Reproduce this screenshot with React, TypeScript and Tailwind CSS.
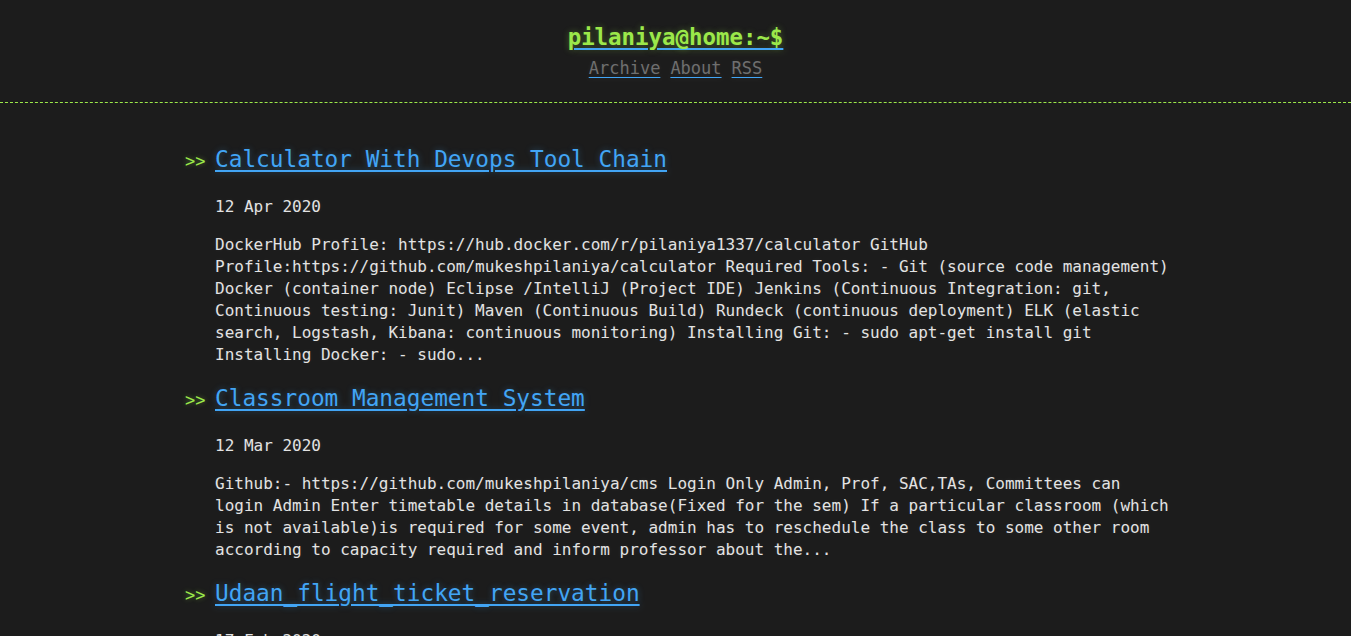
const posts = [
  {
    title: "Calculator With Devops Tool Chain",
    date: "12 Apr 2020",
    excerpt:
      "DockerHub Profile: https://hub.docker.com/r/pilaniya1337/calculator GitHub Profile:https://github.com/mukeshpilaniya/calculator Required Tools: - Git (source code management) Docker (container node) Eclipse /IntelliJ (Project IDE) Jenkins (Continuous Integration: git, Continuous testing: Junit) Maven (Continuous Build) Rundeck (continuous deployment) ELK (elastic search, Logstash, Kibana: continuous monitoring) Installing Git: - sudo apt-get install git Installing Docker: - sudo...",
  },
  {
    title: "Classroom Management System",
    date: "12 Mar 2020",
    excerpt:
      "Github:- https://github.com/mukeshpilaniya/cms Login Only Admin, Prof, SAC,TAs, Committees can login Admin Enter timetable details in database(Fixed for the sem) If a particular classroom (which is not available)is required for some event, admin has to reschedule the class to some other room according to capacity required and inform professor about the...",
  },
  {
    title: "Udaan_flight_ticket_reservation",
    date: "17 Feb 2020",
    excerpt:
      "Github:- https://github.com/mukeshpilaniya/Udaan_flight_ticket_reservation",
  },
];

export default function App() {
  return (
    <div className="min-h-screen bg-[#1c1c1c] text-[#e3e3e3] font-['DejaVu_Sans_Mono',monospace] [text-shadow:0_0_5px_rgba(255,255,255,0.08)]">
      {/* Header */}
      <header className="pt-[22px] pb-[22px] border-b border-dashed border-[#9be84a] text-center">
        <a
          href="#"
          className="text-[22.4px] leading-[30px] font-bold text-[#9be84a] underline decoration-[#42a5f5] decoration-2 underline-offset-[3px] [text-shadow:0_0_6px_rgba(155,232,74,0.35)]"
        >
          pilaniya@home:~$
        </a>
        <nav className="mt-[4px] text-[17px] leading-[24px] text-[#6f6f6f] space-x-[10px]">
          <a href="#" className="underline decoration-[#42a5f5] underline-offset-[3px]">Archive</a>
          <a href="#" className="underline decoration-[#42a5f5] underline-offset-[3px]">About</a>
          <a href="#" className="underline decoration-[#42a5f5] underline-offset-[3px]">RSS</a>
        </nav>
      </header>

      {/* Posts */}
      <main className="w-[981px] mx-auto pt-[38px]">
        {posts.map((post, i) => (
          <article key={i} className="mb-[14px]">
            <h2 className="flex items-baseline">
              <span className="w-[30px] text-[17px] text-[#9be84a] [text-shadow:0_0_5px_rgba(155,232,74,0.4)]">&gt;&gt;</span>
              <a
                href="#"
                className="text-[22.75px] leading-[36px] text-[#42a5f5] underline underline-offset-[3px] [text-shadow:0_0_6px_rgba(66,165,245,0.35)]"
              >
                {post.title}
              </a>
            </h2>
            <div className="ml-[30px] w-[958px] text-[16px] leading-[22px]">
              <p className="mt-[19px]">{post.date}</p>
              <p className="mt-[16px]">{post.excerpt}</p>
            </div>
          </article>
        ))}
      </main>
    </div>
  );
}
